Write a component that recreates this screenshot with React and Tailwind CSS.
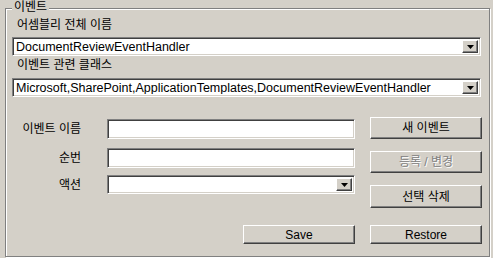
import React from 'react';

const font = { fontFamily: '"Liberation Sans", "Noto Sans CJK KR", sans-serif' };

const Arrow = () => (
  <svg width="7" height="4" viewBox="0 0 7 4">
    <path d="M0 0h7L3.5 4z" fill="#000" />
  </svg>
);

const DropBtn = () => (
  <div className="w-[16px] h-full flex items-center justify-center bg-[#d4d0c8] border border-t-white border-l-white border-r-[#404040] border-b-[#404040] shadow-[inset_-1px_-1px_0_#808080]">
    <Arrow />
  </div>
);

const Sunken = ({ className = '', children }) => (
  <div className={`bg-white border border-t-[#808080] border-l-[#808080] border-r-white border-b-white shadow-[inset_1px_1px_0_#404040,inset_-1px_-1px_0_#d4d0c8] ${className}`}>
    {children}
  </div>
);

const Combo = ({ value, className = '' }) => (
  <Sunken className={`flex items-stretch p-[2px] ${className}`}>
    <div className="flex-1 pl-[1px] text-[12.5px] leading-[15px] text-black whitespace-nowrap overflow-hidden">{value}</div>
    <DropBtn />
  </Sunken>
);

const Btn = ({ children, disabled, className = '' }) => (
  <button
    className={`w-[112px] bg-[#d4d0c8] border border-t-white border-l-white border-r-[#404040] border-b-[#404040] shadow-[inset_-1px_-1px_0_#808080] text-[12px] leading-[14px] ${disabled ? 'text-[#808080] [text-shadow:1px_1px_0_#fff]' : 'text-black'} ${className}`}
  >
    {children}
  </button>
);

export default function App() {
  return (
    <div className="w-[493px] h-[258px] bg-[#d4d0c8] pl-[5px] pt-[8px] overflow-hidden" style={font}>
      <div className="relative w-[485px] h-[249px] border border-[#808080] shadow-[inset_1px_1px_0_#fff,1px_1px_0_#fff] pl-[6px] pr-[6px] pt-[8px]">
        <div className="absolute left-[6px] top-[-9px] px-[2px] bg-[#d4d0c8] text-[12px] leading-[14px] text-black">이벤트</div>

        <div className="h-[16px] leading-[16px] text-[12px] pl-[5px] text-black">어셈블리 전체 이름</div>
        <Combo className="mt-[4px] h-[19px] w-[469px]" value="DocumentReviewEventHandler" />
        <div className="mt-[1px] h-[16px] leading-[16px] text-[12px] pl-[5px] text-black">이벤트 관련 클래스</div>
        <Combo className="mt-[5px] h-[19px] w-[469px]" value="Microsoft,SharePoint,ApplicationTemplates,DocumentReviewEventHandler" />

        <div className="flex mt-[20px]">
          <div className="flex flex-col pt-[2px]">
            <div className="flex items-center h-[20px]">
              <div className="w-[69px] text-right text-[12px] text-black">이벤트 이름</div>
              <Sunken className="ml-[26px] w-[248px] h-[20px]" />
            </div>
            <div className="flex items-center h-[20px] mt-[9px]">
              <div className="w-[69px] text-right text-[12px] text-black">순번</div>
              <Sunken className="ml-[26px] w-[248px] h-[20px]" />
            </div>
            <div className="flex items-center h-[19px] mt-[7px]">
              <div className="w-[69px] text-right text-[12px] text-black">액션</div>
              <Combo className="ml-[26px] w-[248px] h-[19px]" value="" />
            </div>
          </div>
          <div className="flex flex-col ml-[15px]">
            <Btn className="h-[22px]">새 이벤트</Btn>
            <Btn disabled className="h-[22px] mt-[12px]">등록 / 변경</Btn>
            <Btn className="h-[23px] mt-[12px]">선택 삭제</Btn>
          </div>
        </div>

        <div className="flex mt-[17px] pl-[231px]">
          <Btn className="h-[19px]">Save</Btn>
          <Btn className="h-[19px] ml-[15px]">Restore</Btn>
        </div>
      </div>
    </div>
  );
}
